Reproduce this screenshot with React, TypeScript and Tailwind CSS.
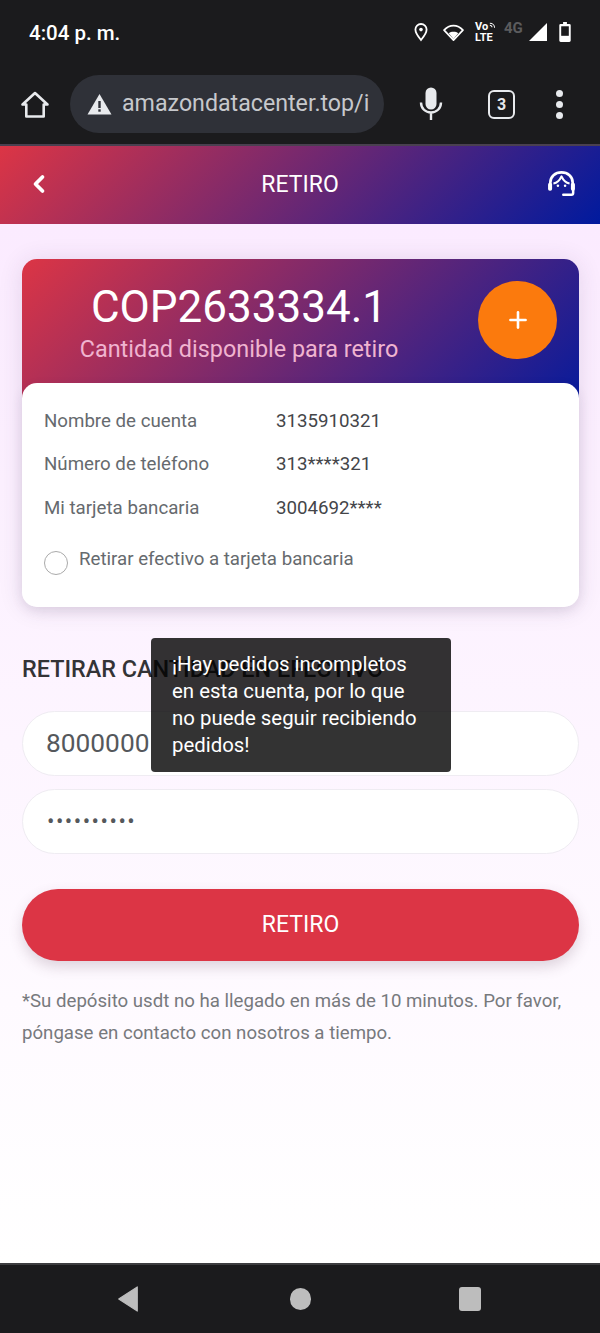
import { Plus, ChevronLeft } from "lucide-react";

const rows = [
  { label: "Nombre de cuenta", value: "3135910321" },
  { label: "Número de teléfono", value: "313****321" },
  { label: "Mi tarjeta bancaria", value: "3004692****" },
];

function StatusIcons() {
  return (
    <div className="mb-[2px] flex items-center">
      <svg width="14" height="19" viewBox="0 0 14 19" className="mr-[15px]">
        <path d="M7 1a5.600 5.600 0 0 0-5.600 5.600C1.400 10.500 7 17 7 17s5.600-6.500 5.600-10.400A5.600 5.600 0 0 0 7 1z" fill="none" stroke="#fff" strokeWidth="1.800" />
        <circle cx="7" cy="6.600" r="1.800" fill="#fff" />
      </svg>
      <svg width="21" height="17" viewBox="0 0 22 18" className="mr-[11px]">
        <path d="M1 6.500C3.800 3.300 7.200 1.700 11 1.700s7.200 1.600 10 4.800L11 17z" fill="none" stroke="#fff" strokeWidth="1.800" strokeLinejoin="round" />
        <path d="M6 9.800c1.400-1 3-1.500 5-1.500s3.600.5 5 1.500L11 16z" fill="#fff" />
      </svg>
      <div className="mr-[8px] w-[21px] text-[11px] font-bold leading-[11px] text-white">
        <div className="flex items-center">
          Vo
          <svg width="8" height="9" viewBox="0 0 8 9" className="ml-[1px]">
            <path d="M1 3c1.500 0 2.500 1 2.500 2.500M1 .8C4 .8 6.500 3 6.500 6" fill="none" stroke="#fff" strokeWidth="1.200" />
          </svg>
        </div>
        <div>LTE</div>
      </div>
      <div className="mb-[8px] mr-[6px] w-[19px] text-[15px] font-bold leading-none text-[#5c5c5e]">4G</div>
      <svg width="18" height="18" viewBox="0 0 18 18" className="mr-[12px]">
        <path d="M18 0v18H0z" fill="#fff" />
      </svg>
      <svg width="12" height="20" viewBox="0 0 12 21">
        <path d="M4 0h4v2h2.500A1.500 1.500 0 0 1 12 3.500V19.500a1.500 1.500 0 0 1-1.500 1.500h-9A1.500 1.500 0 0 1 0 19.500V3.500A1.500 1.500 0 0 1 1.500 2H4z" fill="#fff" />
        <rect x="2" y="4.500" width="8" height="10" fill="#1b1b1d" />
      </svg>
    </div>
  );
}

function BrowserBar() {
  return (
    <div className="flex h-[73px] items-start border-b-2 border-[#4a4050] bg-[#1b1b1d]">
      <svg width="30" height="30" viewBox="0 0 30 30" className="ml-[20px] mt-[17px]">
        <path d="M15 3 2.500 14.500h3.800V26.500h17.400V14.500h3.800z" fill="none" stroke="#e8eaed" strokeWidth="2.600" strokeLinejoin="round" />
      </svg>
      <div className="ml-[20px] mt-[2px] flex h-[58px] w-[314px] items-center rounded-full bg-[#2f3138] pl-[17px]">
        <svg width="25" height="22" viewBox="0 0 25 22">
          <path d="M12.500 1 24.500 21.500H.500z" fill="#e8eaed" />
          <rect x="11.300" y="8" width="2.400" height="7" fill="#2f3138" />
          <rect x="11.300" y="16.300" width="2.400" height="2.400" fill="#2f3138" />
        </svg>
        <span className="ml-[10px] whitespace-nowrap text-[23.200px] leading-none text-[#c6c8cc]">amazondatacenter.top/i</span>
      </div>
      <svg width="24" height="34" viewBox="0 0 24 34" className="ml-[35px] mt-[14px]">
        <rect x="6.500" y="0.500" width="11" height="22" rx="5.500" fill="#e8eaed" />
        <path d="M2 15.500c0 6 4.500 10 10 10s10-4 10-10M12 25.500V33" fill="none" stroke="#e8eaed" strokeWidth="2.400" />
      </svg>
      <div className="ml-[45px] mt-[17px] flex h-[29px] w-[27px] items-center justify-center rounded-[6px] border-[2.500px] border-[#e8eaed] text-[16px] font-bold leading-none text-[#e8eaed]">3</div>
      <div className="ml-[41px] mt-[17px] flex flex-col gap-[4px]">
        <div className="h-[7px] w-[7px] rounded-full bg-[#e8eaed]" />
        <div className="h-[7px] w-[7px] rounded-full bg-[#e8eaed]" />
        <div className="h-[7px] w-[7px] rounded-full bg-[#e8eaed]" />
      </div>
    </div>
  );
}

function Headset() {
  return (
    <svg width="29" height="26" viewBox="0 0 32 29">
      <path d="M3.500 15v-2C3.500 6 9 1.500 16 1.500S28.500 6 28.500 13v2" fill="none" stroke="#fff" strokeWidth="3" />
      <path d="M7 14c3-.500 6.500-2.500 9-8 2.500 5.500 6 7.500 9 8" fill="none" stroke="#fff" strokeWidth="2.400" strokeLinejoin="round" />
      <rect x="1" y="13" width="4.500" height="9" rx="2" fill="#fff" />
      <rect x="26.500" y="13" width="4.500" height="9" rx="2" fill="#fff" />
      <circle cx="12" cy="16.500" r="1.400" fill="#fff" />
      <circle cx="20" cy="16.500" r="1.400" fill="#fff" />
      <path d="M29 21v3.500a2 2 0 0 1-2 2h-9" fill="none" stroke="#fff" strokeWidth="2.800" strokeLinecap="round" />
    </svg>
  );
}

export default function App() {
  return (
    <div className="relative flex h-[1333px] w-[600px] flex-col overflow-hidden bg-white font-['Roboto',sans-serif]">
      <div className="flex h-[73px] items-center justify-between bg-[#1b1b1d] pb-[7px] pl-[29px] pr-[29px]">
        <span className="text-[20.500px] font-medium leading-none text-white">4:04 p. m.</span>
        <StatusIcons />
      </div>
      <BrowserBar />

      <div className="flex h-[78px] items-center justify-between bg-[linear-gradient(135deg,#dc3545,#001a9e)] pl-[25px] pr-[24px]">
        <ChevronLeft size={28} strokeWidth={3.2} color="#fff" className="-mt-[3px]" />
        <span className="-mt-[1px] text-[23px] leading-none text-white">RETIRO</span>
        <div className="-mt-[3px]">
          <Headset />
        </div>
      </div>

      <div className="flex flex-1 flex-col bg-gradient-to-b from-[#fbebff] to-white pl-[22px] pr-[21px] pt-[35px]">
        <div className="rounded-[15px] shadow-[0_2px_24px_rgba(60,40,80,0.12)]">
          <div className="flex h-[165px] items-start rounded-t-[15px] bg-[linear-gradient(135deg,#dc3545,#001a9e)]">
            <div className="ml-[30px] mt-[22px] flex w-[374px] flex-col items-center">
              <span className="text-[44px] leading-[52px] text-white">COP2633334.1</span>
              <span className="mt-[1px] text-[23.400px] leading-[30px] text-[#f0b4d0]">Cantidad disponible para retiro</span>
            </div>
            <div className="ml-[52px] mt-[22px] flex h-[78px] w-[79px] items-center justify-center rounded-full bg-[#fb7a0d]">
              <Plus size={26} strokeWidth={2.4} color="#fff" />
            </div>
          </div>
          <div className="relative -mt-[41px] h-[224px] rounded-[15px] bg-white px-[22px] pt-[16.500px] shadow-[0_4px_12px_rgba(60,40,80,0.1)]">
            {rows.map((r) => (
              <div key={r.label} className="flex h-[43.500px] items-center text-[18.700px] leading-none">
                <span className="w-[232px] text-[#666a6e]">{r.label}</span>
                <span className="text-[#444549]">{r.value}</span>
              </div>
            ))}
            <div className="mt-[14.500px] flex items-start">
              <div className="mt-[6px] h-[24px] w-[24px] rounded-full border border-[#aaaaaa] bg-white" />
              <span className="ml-[11px] mt-[2px] text-[18.700px] leading-[24px] text-[#666a6e]">Retirar efectivo a tarjeta bancaria</span>
            </div>
          </div>
        </div>

        <h2 className="mt-[48px] whitespace-nowrap text-[23.400px] font-medium leading-[28px] text-[#333336]">RETIRAR CANTIDAD EN EFECTIVO</h2>

        <div className="mt-[28px] flex h-[65px] items-center rounded-full border border-[#efecf2] bg-white pl-[23px] text-[26.300px] leading-none text-[#55585c]">8000000</div>
        <div className="mt-[13px] flex h-[65px] items-center rounded-full border border-[#efecf2] bg-white pl-[24px] text-[22px] leading-none tracking-[1.500px] text-[#55585c]">••••••••••</div>

        <button className="mt-[35px] h-[72px] rounded-full bg-[#dc3545] text-[23px] text-white shadow-[0_6px_14px_rgba(90,60,80,0.2)]">RETIRO</button>

        <p className="mt-[24px] text-[18.650px] leading-[32px] text-[#77797d]">
          *Su depósito usdt no ha llegado en más de 10 minutos. Por favor, póngase en contacto con nosotros a tiempo.
        </p>
      </div>

      <div className="flex h-[70px] items-center border-t-2 border-[#3d3d40] bg-[#1b1b1d] pl-[117px]">
        <svg width="22" height="26" viewBox="0 0 22 28">
          <path d="M21 1v26L1 14z" fill="#bdbdbd" stroke="#bdbdbd" strokeWidth="1.200" strokeLinejoin="round" />
        </svg>
        <div className="ml-[151px] h-[22px] w-[21px] rounded-full bg-[#bdbdbd]" />
        <div className="ml-[148px] h-[24px] w-[22px] rounded-[3px] bg-[#bdbdbd]" />
      </div>

      <div className="absolute left-[151px] top-[638px] h-[134px] w-[300px] rounded-[4px] bg-[rgba(0,0,0,0.8)] pl-[21px] pr-[30px] pt-[13px] text-[20.400px] leading-[27px] text-white">
        ¡Hay pedidos incompletos en esta cuenta, por lo que no puede seguir recibiendo pedidos!
      </div>
    </div>
  );
}
